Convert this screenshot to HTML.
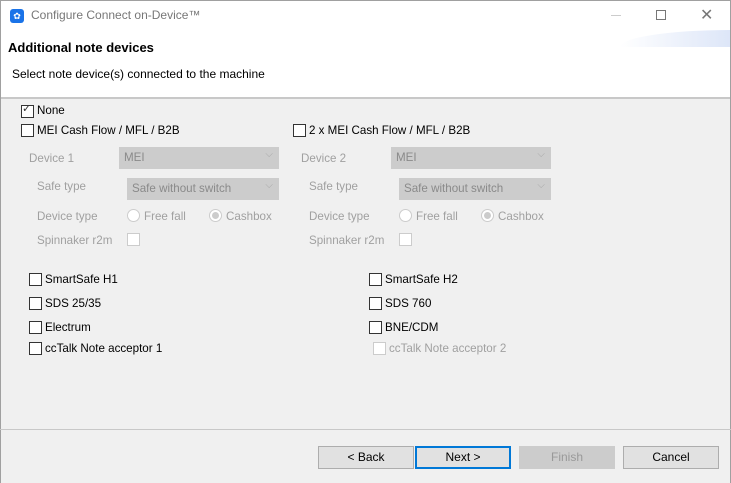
<!DOCTYPE html><html><head><style>
*{margin:0;padding:0;box-sizing:border-box}
body{width:731px;height:483px;position:relative;background:#f0f0f0;font-family:"Liberation Sans",sans-serif;font-size:11.6px;color:#000;overflow:hidden}
.a{position:absolute;white-space:nowrap}
.cb{position:absolute;width:13px;height:13px;border:1px solid #333;background:#fff}
.cbd{border-color:#ccc}
.g{color:#a0a0a0}
.sel{position:absolute;height:22px;background:#ccc;color:#8a8a8a;padding:4px 0 0 5px}
.sel:after{content:"⌵";position:absolute;right:6px;top:2px;color:#aaa;font-size:10px}
.rad{position:absolute;width:13px;height:13px;border:1px solid #ccc;border-radius:50%;background:#fff}
.rad.on:after{content:"";position:absolute;left:2px;top:2px;width:7px;height:7px;border-radius:50%;background:#ccc}
.btn{position:absolute;top:446px;width:96px;height:23px;background:#e1e1e1;border:1px solid #adadad;text-align:center;line-height:21px;font-size:12px}
</style></head><body>
<div class="a" style="left:0;top:0;width:731px;height:97px;background:#fff;border:1px solid #a0a0a0;border-bottom:none"></div>
<div class="a" style="left:620px;top:30px;width:110px;height:17px;background:linear-gradient(90deg,rgba(220,230,250,0),#dde6f8);border-radius:100% 0 0 0/100% 0 0 0"></div>
<div class="a" style="left:0;top:97px;width:731px;height:2px;background:#c8c8c8"></div>
<div class="a" style="left:10px;top:9px;width:14px;height:14px;background:#1a73e8;border-radius:3px;color:#fff;font-size:9px;text-align:center;line-height:14px">✿</div>
<div class="a" style="left:31px;top:8px;color:#777;font-size:12px">Configure Connect on-Device™</div>
<div class="a" style="left:611px;top:15px;width:10px;height:1px;background:#ccc"></div>
<div class="a" style="left:656px;top:10px;width:10px;height:10px;border:1px solid #777"></div>
<div class="a" style="left:700px;top:5px;color:#777;font-size:16px">✕</div>
<div class="a" style="left:8px;top:40px;font-weight:bold;font-size:13px">Additional note devices</div>
<div class="a" style="left:12px;top:67px;font-size:12px">Select note device(s) connected to the machine</div>
<div class="cb" style="left:21px;top:105px"></div><div class="a" style="left:22px;top:102px;font-size:11px;color:#333">✓</div>
<div class="a" style="left:37px;top:104px">None</div>
<div class="cb" style="left:21px;top:124px"></div><div class="a" style="left:37px;top:124px">MEI Cash Flow / MFL / B2B</div>
<div class="cb" style="left:293px;top:124px"></div><div class="a" style="left:309px;top:124px">2 x MEI Cash Flow / MFL / B2B</div>

<div class="a g" style="left:29px;top:152px">Device 1</div><div class="sel" style="left:119px;top:147px;width:160px">MEI</div>
<div class="a g" style="left:37px;top:180px">Safe type</div><div class="sel" style="left:127px;top:178px;width:152px">Safe without switch</div>
<div class="a g" style="left:37px;top:210px">Device type</div>
<div class="rad" style="left:127px;top:209px"></div><div class="a g" style="left:144px;top:210px">Free fall</div>
<div class="rad on" style="left:209px;top:209px"></div><div class="a g" style="left:226px;top:210px">Cashbox</div>
<div class="a g" style="left:37px;top:234px">Spinnaker r2m</div><div class="cb cbd" style="left:127px;top:233px"></div>

<div class="a g" style="left:301px;top:152px">Device 2</div><div class="sel" style="left:391px;top:147px;width:160px">MEI</div>
<div class="a g" style="left:309px;top:180px">Safe type</div><div class="sel" style="left:399px;top:178px;width:152px">Safe without switch</div>
<div class="a g" style="left:309px;top:210px">Device type</div>
<div class="rad" style="left:399px;top:209px"></div><div class="a g" style="left:416px;top:210px">Free fall</div>
<div class="rad on" style="left:481px;top:209px"></div><div class="a g" style="left:498px;top:210px">Cashbox</div>
<div class="a g" style="left:309px;top:234px">Spinnaker r2m</div><div class="cb cbd" style="left:399px;top:233px"></div>

<div class="cb" style="left:29px;top:273px"></div><div class="a" style="left:45px;top:273px">SmartSafe H1</div>
<div class="cb" style="left:29px;top:297px"></div><div class="a" style="left:45px;top:297px">SDS 25/35</div>
<div class="cb" style="left:29px;top:321px"></div><div class="a" style="left:45px;top:321px">Electrum</div>
<div class="cb" style="left:29px;top:342px"></div><div class="a" style="left:45px;top:342px">ccTalk Note acceptor 1</div>
<div class="cb" style="left:369px;top:273px"></div><div class="a" style="left:385px;top:273px">SmartSafe H2</div>
<div class="cb" style="left:369px;top:297px"></div><div class="a" style="left:385px;top:297px">SDS 760</div>
<div class="cb" style="left:369px;top:321px"></div><div class="a" style="left:385px;top:321px">BNE/CDM</div>
<div class="cb cbd" style="left:373px;top:342px"></div><div class="a g" style="left:389px;top:342px">ccTalk Note acceptor 2</div>

<div class="a" style="left:0;top:97px;width:1px;height:386px;background:#a0a0a0"></div>
<div class="a" style="left:730px;top:97px;width:1px;height:386px;background:#a0a0a0"></div>
<div class="a" style="left:0;top:429px;width:731px;height:1px;background:#c8c8c8"></div>
<div class="btn" style="left:318px">&lt; Back</div>
<div class="btn" style="left:415px;border:2px solid #0078d7;line-height:19px">Next &gt;</div>
<div class="btn" style="left:519px;background:#ccc;border-color:#ccc;color:#999">Finish</div>
<div class="btn" style="left:623px">Cancel</div>
</body></html>
